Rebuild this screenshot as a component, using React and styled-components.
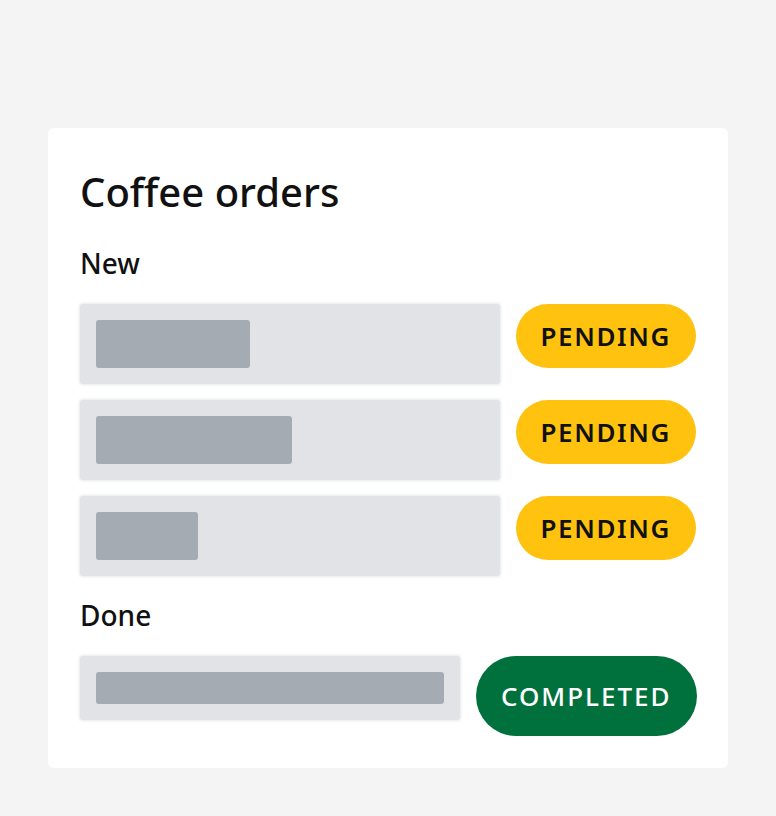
import styled, { createGlobalStyle } from "styled-components"

const GlobalStyle = createGlobalStyle`
body{
    margin: 0;
    background-color: #f4f4f4;
    font-family: 'Noto Sans', 'Open Sans', sans-serif;
    color: #111;
}
`

const Page = styled.div`
padding: 128px 48px 48px 48px;
`

const Card = styled.section`
background-color: white;
border-radius: 6px;
padding: 32px;
display: flex;
flex-direction: column;
`

const Title = styled.h1`
margin: 8px 0 29px 0;
font-size: 40px;
font-weight: 500;
line-height: 48px;
`

const Label = styled.h2`
margin: ${p => p.first ? 0 : 21}px 0 23px 0;
font-size: 28px;
font-weight: 500;
line-height: 36px;
`

const List = styled.div`
display: flex;
flex-direction: column;
gap: 16px;
`

const Row = styled.div`
display: flex;
align-items: flex-start;
gap: 16px;
`

const Skeleton = styled.div`
width: ${p => p.width}px;
padding: 16px;
box-sizing: border-box;
background-color: #e1e3e6;
border-radius: 3px;
box-shadow: 0 0 3px 1px #e6e8ea;
`

const Bar = styled.div`
width: ${p => p.width}px;
height: ${p => p.height}px;
background-color: #a4abb2;
border-radius: 3px;
`

const Badge = styled.span`
display: inline-flex;
align-items: center;
justify-content: center;
box-sizing: border-box;
height: ${p => p.done ? 80 : 64}px;
padding: 0 25px;
border-radius: 40px;
font-size: 26px;
font-weight: ${p => p.done ? 500 : 600};
letter-spacing: ${p => p.done ? 2 : 1.6}px;
background-color: ${p => p.done ? "#00713d" : "#ffc20e"};
color: ${p => p.done ? "white" : "#111"};
`

const pending = [154, 196, 102]

export default function App(){
    return(
        <Page>
            <GlobalStyle/>
            <Card>
                <Title>Coffee orders</Title>
                <Label first>New</Label>
                <List>
                    {pending.map((w, i) => (
                        <Row key={i}>
                            <Skeleton width={420}>
                                <Bar width={w} height={48}/>
                            </Skeleton>
                            <Badge>PENDING</Badge>
                        </Row>
                    ))}
                </List>
                <Label>Done</Label>
                <List>
                    <Row>
                        <Skeleton width={380}>
                            <Bar width={348} height={32}/>
                        </Skeleton>
                        <Badge done>COMPLETED</Badge>
                    </Row>
                </List>
            </Card>
        </Page>
    )
}
